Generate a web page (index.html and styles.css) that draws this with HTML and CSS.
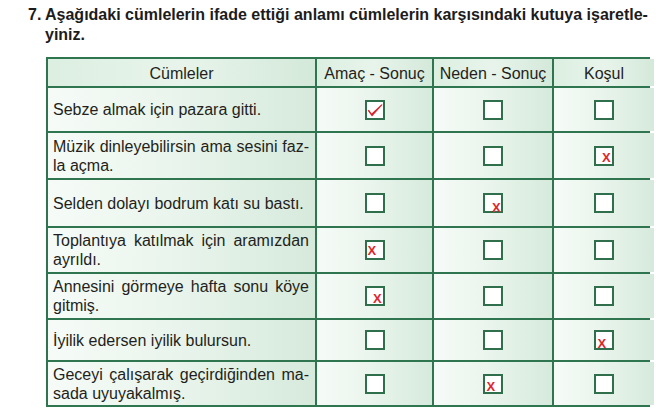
FILE: index.html
```html
<!DOCTYPE html>
<html lang="tr">
<head>
<meta charset="utf-8">
<title>Soru 7</title>
<link rel="stylesheet" href="styles.css">
</head>
<body>
<div class="question">
  <span class="num">7.</span>
  <span class="qtext">Aşağıdaki cümlelerin ifade ettiği anlamı cümlelerin karşısındaki kutuya işaretle-<br>yiniz.</span>
</div>

<div class="grid">
  <div class="cell head">Cümleler</div>
  <div class="cell head">Amaç - Sonuç</div>
  <div class="cell head">Neden - Sonuç</div>
  <div class="cell head">Koşul</div>

  <div class="cell txt"><span class="ln">Sebze almak için pazara gitti.</span></div>
  <div class="cell box"><span class="cb"><svg class="tick" viewBox="0 0 16 16" width="16" height="16"><path d="M0.6 7.6 L2 6.8 L4.6 10.6 L14.6 1.2 L15.6 1.8 L5 13.4 Z" fill="#d8232a"/></svg></span></div>
  <div class="cell box"><span class="cb"></span></div>
  <div class="cell box"><span class="cb"></span></div>

  <div class="cell txt"><span class="ln j">Müzik dinleyebilirsin ama sesini faz-</span><span class="ln">la açma.</span></div>
  <div class="cell box"><span class="cb"></span></div>
  <div class="cell box"><span class="cb"></span></div>
  <div class="cell box"><span class="cb"><span class="x x-r2">X</span></span></div>

  <div class="cell txt"><span class="ln">Selden dolayı bodrum katı su bastı.</span></div>
  <div class="cell box"><span class="cb"></span></div>
  <div class="cell box"><span class="cb"><span class="x x-r3">X</span></span></div>
  <div class="cell box"><span class="cb"></span></div>

  <div class="cell txt"><span class="ln j">Toplantıya katılmak için aramızdan</span><span class="ln">ayrıldı.</span></div>
  <div class="cell box"><span class="cb"><span class="x x-r4">X</span></span></div>
  <div class="cell box"><span class="cb"></span></div>
  <div class="cell box"><span class="cb"></span></div>

  <div class="cell txt"><span class="ln j">Annesini görmeye hafta sonu köye</span><span class="ln">gitmiş.</span></div>
  <div class="cell box"><span class="cb"><span class="x x-r5">X</span></span></div>
  <div class="cell box"><span class="cb"></span></div>
  <div class="cell box"><span class="cb"></span></div>

  <div class="cell txt"><span class="ln">İyilik edersen iyilik bulursun.</span></div>
  <div class="cell box"><span class="cb"></span></div>
  <div class="cell box"><span class="cb"></span></div>
  <div class="cell box"><span class="cb"><span class="x x-r6">X</span></span></div>

  <div class="cell txt"><span class="ln j">Geceyi çalışarak geçirdiğinden ma-</span><span class="ln">sada uyuyakalmış.</span></div>
  <div class="cell box"><span class="cb"></span></div>
  <div class="cell box"><span class="cb"><span class="x x-r7">X</span></span></div>
  <div class="cell box"><span class="cb"></span></div>
</div>
</body>
</html>
```

FILE: styles.css
```css
html, body {
  margin: 0;
  padding: 0;
  background: #ffffff;
}

body {
  width: 659px;
  height: 419px;
  overflow: hidden;
  font-family: "Liberation Sans", Arial, sans-serif;
}

.question {
  display: flex;
  padding: 5px 0 0 28px;
  height: 41px;
  font-size: 16px;
  font-weight: bold;
  line-height: 20px;
  color: #1c1c1c;
}

.num {
  width: 17px;
  flex: none;
}

.qtext {
  white-space: nowrap;
}

.grid {
  display: grid;
  grid-template-columns: 267px 115px 118px 100px;
  grid-template-rows: 27px 43px 45px 46px 44px 44px 40px 43px;
  gap: 2px;
  padding: 2px;
  width: 600px;
  margin: 11px 0 0 46px;
  background: #2f7550;
}

.cell {
  background: linear-gradient(to right, #f6fbf7 0%, #eaf5ed 45%, #d6eadc 100%);
  color: #231f20;
  font-size: 16px;
  line-height: 19px;
}

.head {
  display: flex;
  align-items: center;
  justify-content: center;
  padding-top: 2px;
  background: linear-gradient(to right, #dcefe1 0%, #e8f4eb 50%, #d4e9da 100%);
}

.txt {
  display: flex;
  flex-direction: column;
  justify-content: center;
  padding: 0 6px 0 5px;
}

.ln {
  display: block;
}

.j {
  text-align: justify;
  text-align-last: justify;
}

.box {
  display: flex;
  align-items: center;
  justify-content: center;
}

.cb {
  position: relative;
  box-sizing: border-box;
  width: 20px;
  height: 20px;
  border: 2px solid #2f6f4c;
  background: #ffffff;
}

.tick {
  position: absolute;
  left: 0;
  top: 1px;
}

.x {
  position: absolute;
  font-size: 13px;
  line-height: 13px;
  font-weight: bold;
  color: #e0262c;
}

.x-r2 { left: 6px; top: 3px; }
.x-r3 { left: 7px; top: 5.5px; }
.x-r4 { left: 1px; top: 1.5px; }
.x-r5 { left: 6.5px; top: 3.5px; }
.x-r6 { left: 1.5px; top: 4.5px; }
.x-r7 { left: 1.5px; top: 4.5px; }
```
